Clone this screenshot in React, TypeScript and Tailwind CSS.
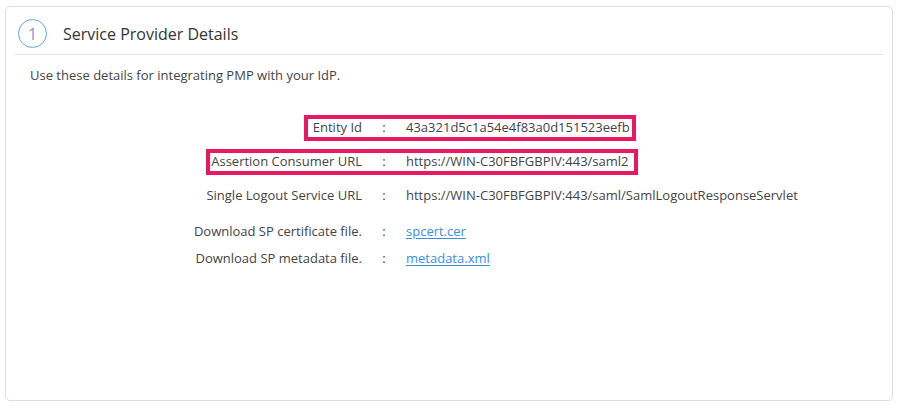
// SAML 設定 — Service Provider Details card

type Row = {
  label: string;
  value: string;
  link?: boolean;
  // 赤枠で強調する行 (pl/pr は枠と文字の間隔)
  mark?: { pl: string; pr: string };
};

const spRows: Row[] = [
  { label: 'Entity Id', value: '43a321d5c1a54e4f83a0d151523eefb', mark: { pl: 'pl-[5px]', pr: 'pr-[2px]' } },
  { label: 'Assertion Consumer URL', value: 'https://WIN-C30FBFGBPIV:443/saml2', mark: { pl: 'pl-[1px]', pr: 'pr-[5px]' } },
  { label: 'Single Logout Service URL', value: 'https://WIN-C30FBFGBPIV:443/saml/SamlLogoutResponseServlet' },
];

const downloadRows: Row[] = [
  { label: 'Download SP certificate file.', value: 'spcert.cer', link: true },
  { label: 'Download SP metadata file.', value: 'metadata.xml', link: true },
];

function DetailRow({ row }: { row: Row }): JSX.Element {
  const c = row.mark ? 'border-[#e8195e]' : 'border-transparent';
  return (
    <div className="flex h-[26px] items-stretch">
      <div className="flex w-[356px] shrink-0 justify-end">
        <span className={`flex items-center border-y-4 border-l-4 ${c} ${row.mark ? row.mark.pl : ''}`}>
          {row.label}
        </span>
      </div>
      <span className={`flex w-[44px] shrink-0 items-center justify-center border-y-4 ${c}`}>:</span>
      <span className={`flex items-center border-y-4 border-r-4 ${c} ${row.mark ? row.mark.pr : ''}`}>
        {row.link ? (
          <a href="#" className="text-[#3d8fd8] underline underline-offset-2">
            {row.value}
          </a>
        ) : (
          row.value
        )}
      </span>
    </div>
  );
}

export default function App(): JSX.Element {
  return (
    <div
      className="h-[406px] w-[898px] bg-white pl-[5px] pr-[5px] pt-[6px] text-[13px] text-[#444]"
      style={{ fontFamily: '"Open Sans", "Noto Sans", sans-serif' }}
    >
      <div className="h-[395px] rounded-[5px] border border-[#dedede] bg-white">
        {/* Header */}
        <div className="mx-[9px] flex items-center gap-[16px] border-b border-[#e3e3e3] pb-[6px] pl-[3px] pt-[12px]">
          <div className="flex h-[29px] w-[29px] items-center justify-center rounded-full border border-[#5ea6e6] text-[16px] leading-none text-[#8790d6]">
            1
          </div>
          <div className="text-[16px] leading-[22px] text-[#333]">Service Provider Details</div>
        </div>

        {/* Body */}
        <div className="pt-[11px]">
          <p className="pl-[24px] leading-[18px] text-[#444]">Use these details for integrating PMP with your IdP.</p>

          <div className="mt-[31px] flex flex-col gap-[8px]">
            {spRows.map((r) => (
              <DetailRow key={r.label} row={r} />
            ))}
          </div>

          <div className="mt-[10px] flex flex-col gap-[1px]">
            {downloadRows.map((r) => (
              <DetailRow key={r.label} row={r} />
            ))}
          </div>
        </div>
      </div>
    </div>
  );
}
